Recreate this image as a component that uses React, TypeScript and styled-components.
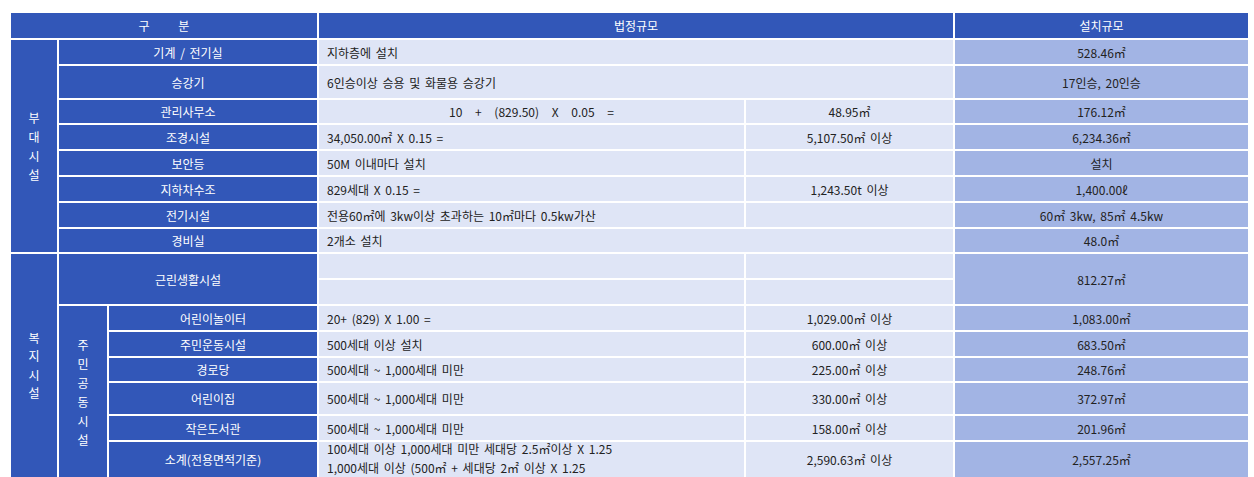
import styled, { createGlobalStyle } from "styled-components";

const GlobalStyle = createGlobalStyle`
  html, body {
    margin: 0;
    padding: 0;
    background: #ffffff;
  }
  body {
    font-family: "Noto Sans CJK KR", "Noto Sans", sans-serif;
    font-size: 12px;
    color: #222;
  }
`;

const Page = styled.div`
  width: 1254px;
  height: 477px;
  overflow: hidden;
  padding: 13px 6px 0 11px;
  box-sizing: border-box;
`;

const Sheet = styled.div`
  display: grid;
  grid-template-columns: 46px 48px 208px 425px 207px 293px;
  grid-template-rows:
    25px 24px 32px 23px 24px 24px 24px 24px 23px 24px 24px 24px 24px
    23px 31px 24px 35px;
  gap: 2px;
`;

type Place = { $col: string; $row: string };

const Cell = styled.div<Place>`
  grid-column: ${(p) => p.$col};
  grid-row: ${(p) => p.$row};
  display: flex;
  align-items: center;
  white-space: pre;
  line-height: 19px;
  word-spacing: 2px;
  overflow: visible;
`;

const HeadCell = styled(Cell)`
  background: #3257b8;
  color: #ffffff;
  justify-content: center;
  word-spacing: 26px;
`;

const NameCell = styled(Cell)`
  background: #3257b8;
  color: #ffffff;
  justify-content: center;
`;

const LegalCell = styled(Cell)<{ $center?: boolean }>`
  background: #dfe5f6;
  justify-content: ${(p) => (p.$center ? "center" : "flex-start")};
  padding-left: ${(p) => (p.$center ? "0" : "8px")};
`;

const Formula = styled.span`
  word-spacing: 10px;
`;

const Lines = styled.div`
  display: flex;
  flex-direction: column;
  margin-top: -4px;
`;

const ResultCell = styled(Cell)`
  background: #a2b4e4;
  justify-content: center;
`;

const Stack = styled.div<{ $step: number }>`
  display: flex;
  flex-direction: column;
  align-items: center;
  line-height: ${(p) => p.$step}px;
`;

function Vertical({ text, step }: { text: string; step: number }) {
  return (
    <Stack $step={step}>
      {text.split("").map((ch, i) => (
        <span key={i}>{ch}</span>
      ))}
    </Stack>
  );
}

type Row = {
  name: string;
  legal?: string;
  value?: string;
  result: string;
  merged?: boolean;
};

const annexRows: Row[] = [
  { name: "기계 / 전기실", legal: "지하층에 설치", result: "528.46㎡", merged: true },
  { name: "승강기", legal: "6인승이상 승용 및 화물용 승강기", result: "17인승, 20인승", merged: true },
  { name: "관리사무소", legal: "", value: "48.95㎡", result: "176.12㎡" },
  { name: "조경시설", legal: "34,050.00㎡ X 0.15 =", value: "5,107.50㎡ 이상", result: "6,234.36㎡" },
  { name: "보안등", legal: "50M 이내마다 설치", value: "", result: "설치" },
  { name: "지하차수조", legal: "829세대 X 0.15 =", value: "1,243.50t 이상", result: "1,400.00ℓ" },
  { name: "전기시설", legal: "전용60㎡에 3kw이상 초과하는 10㎡마다 0.5kw가산", value: "", result: "60㎡ 3kw, 85㎡ 4.5kw" },
  { name: "경비실", legal: "2개소 설치", result: "48.0㎡", merged: true },
];

const communityRows: Row[] = [
  { name: "어린이놀이터", legal: "20+ (829) X 1.00 =", value: "1,029.00㎡ 이상", result: "1,083.00㎡" },
  { name: "주민운동시설", legal: "500세대 이상 설치", value: "600.00㎡ 이상", result: "683.50㎡" },
  { name: "경로당", legal: "500세대 ~ 1,000세대 미만", value: "225.00㎡ 이상", result: "248.76㎡" },
  { name: "어린이집", legal: "500세대 ~ 1,000세대 미만", value: "330.00㎡ 이상", result: "372.97㎡" },
  { name: "작은도서관", legal: "500세대 ~ 1,000세대 미만", value: "158.00㎡ 이상", result: "201.96㎡" },
];

function App() {
  return (
    <Page>
      <GlobalStyle />
      <Sheet>
        <HeadCell $col="1 / 4" $row="1">구 분</HeadCell>
        <HeadCell $col="4 / 6" $row="1">법정규모</HeadCell>
        <HeadCell $col="6" $row="1">설치규모</HeadCell>

        <NameCell $col="1" $row="2 / 10">
          <Vertical text="부대시설" step={19} />
        </NameCell>
        {annexRows.map((r, i) => {
          const row = String(i + 2);
          return [
            <NameCell key={`n${i}`} $col="2 / 4" $row={row}>
              {r.name}
            </NameCell>,
            r.merged ? (
              <LegalCell key={`l${i}`} $col="4 / 6" $row={row}>
                {r.legal}
              </LegalCell>
            ) : r.name === "관리사무소" ? (
              <LegalCell key={`l${i}`} $col="4" $row={row} $center>
                <Formula>10 + (829.50) X 0.05 =</Formula>
              </LegalCell>
            ) : (
              <LegalCell key={`l${i}`} $col="4" $row={row}>
                {r.legal}
              </LegalCell>
            ),
            !r.merged && (
              <LegalCell key={`v${i}`} $col="5" $row={row} $center>
                {r.value}
              </LegalCell>
            ),
            <ResultCell key={`r${i}`} $col="6" $row={row}>
              {r.result}
            </ResultCell>,
          ];
        })}

        <NameCell $col="1" $row="10 / 18">
          <Vertical text="복지시설" step={18.5} />
        </NameCell>
        <NameCell $col="2 / 4" $row="10 / 12">근린생활시설</NameCell>
        <LegalCell $col="4" $row="10" />
        <LegalCell $col="5" $row="10" />
        <LegalCell $col="4" $row="11" />
        <LegalCell $col="5" $row="11" />
        <ResultCell $col="6" $row="10 / 12">812.27㎡</ResultCell>

        <NameCell $col="2" $row="12 / 18">
          <Vertical text="주민공동시설" step={19} />
        </NameCell>
        {communityRows.map((r, i) => {
          const row = String(i + 12);
          return [
            <NameCell key={`cn${i}`} $col="3" $row={row}>
              {r.name}
            </NameCell>,
            <LegalCell key={`cl${i}`} $col="4" $row={row}>
              {r.legal}
            </LegalCell>,
            <LegalCell key={`cv${i}`} $col="5" $row={row} $center>
              {r.value}
            </LegalCell>,
            <ResultCell key={`cr${i}`} $col="6" $row={row}>
              {r.result}
            </ResultCell>,
          ];
        })}
        <NameCell $col="3" $row="17">소계(전용면적기준)</NameCell>
        <LegalCell $col="4" $row="17">
          <Lines>
            <span>100세대 이상 1,000세대 미만 세대당 2.5㎡이상 X 1.25</span>
            <span>1,000세대 이상 (500㎡ + 세대당 2㎡ 이상 X 1.25</span>
          </Lines>
        </LegalCell>
        <LegalCell $col="5" $row="17" $center>
          2,590.63㎡ 이상
        </LegalCell>
        <ResultCell $col="6" $row="17">2,557.25㎡</ResultCell>
      </Sheet>
    </Page>
  );
}

export default App;
